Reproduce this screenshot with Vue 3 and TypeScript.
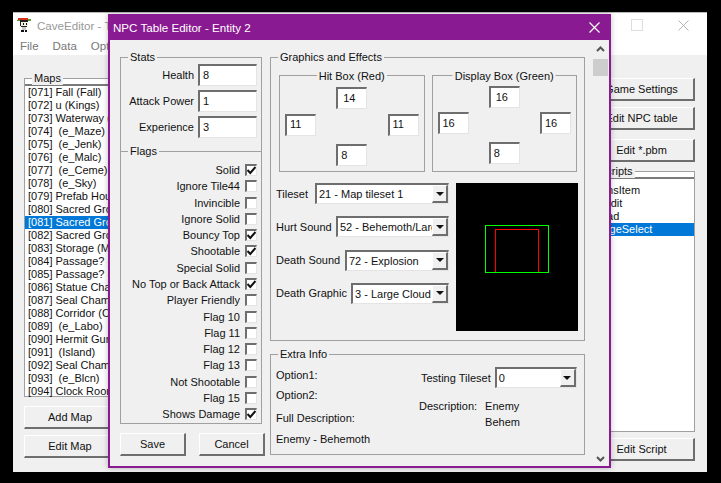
<template>
  <div class="desktop">
    <div class="main-window">
      <div class="main-title">
        <svg class="app-icon" width="16" height="16" viewBox="0 0 16 16" shape-rendering="crispEdges">
          <rect x="1" y="1" width="10" height="2" fill="#d8301c" />
          <rect x="11" y="2" width="3" height="2" fill="#5a9c32" />
          <rect x="0" y="3" width="3" height="1" fill="#5a9c32" />
          <rect x="3" y="3" width="8" height="2" fill="#222" />
          <rect x="3" y="5" width="8" height="4" fill="#f4f0e8" />
          <rect x="3" y="5" width="1" height="4" fill="#222" />
          <rect x="6" y="6" width="1" height="2" fill="#111" />
          <rect x="9" y="6" width="1" height="2" fill="#111" />
          <rect x="4" y="9" width="6" height="1" fill="#222" />
          <rect x="5" y="10" width="4" height="3" fill="#c8c8c8" />
          <rect x="4" y="13" width="3" height="2" fill="#111" />
          <rect x="8" y="13" width="2" height="2" fill="#111" />
        </svg>
        <span class="main-title-text">CaveEditor - The Cave Story Editor</span>
        <span class="win-max"></span>
        <svg class="win-close" width="11" height="11" viewBox="0 0 11 11">
          <path d="M.5.5l10 10M10.500.5l-10 10" stroke="#b4b4b4" fill="none" />
        </svg>
      </div>
      <div class="menu-bar">
        <span>File</span>
        <span>Data</span>
        <span>Options</span>
      </div>
      <div class="main-body">
        <div class="maps-col">
          <div class="group maps-group">
            <span class="legend">Maps</span>
            <div class="list-head"></div>
            <div class="list">
              <div
                v-for="m in maps"
                :key="m"
                class="list-row"
                :class="{ selected: m === selectedMap }"
              >{{ m }}</div>
            </div>
          </div>
          <button class="btn map-btn add">Add Map</button>
          <button class="btn map-btn">Edit Map</button>
        </div>
        <div class="side-col">
          <button class="btn side-btn">Game Settings</button>
          <button class="btn side-btn">Edit NPC table</button>
          <button class="btn side-btn pbm">Edit *.pbm</button>
          <div class="group scripts-group">
            <span class="legend">Scripts</span>
            <div class="list-head"></div>
            <div class="list">
              <div
                v-for="s in scripts"
                :key="s"
                class="list-row script-row"
                :class="{ selected: s === 'StageSelect' }"
              >{{ s }}</div>
            </div>
          </div>
          <button class="btn side-btn script-btn">Edit Script</button>
        </div>
      </div>
    </div>

    <div class="dialog">
      <div class="dialog-title">
        <span>NPC Table Editor - Entity 2</span>
        <svg width="11" height="11" viewBox="0 0 11 11">
          <path d="M.5.5l10 10M10.500.5l-10 10" stroke="#fff" stroke-width="1.2" fill="none" />
        </svg>
      </div>
      <div class="dialog-body">
        <div class="dialog-content">
          <div class="left-col">
            <div class="group stats-group">
              <span class="legend">Stats</span>
              <template v-for="s in stats" :key="s.label">
                <label class="stat-label">{{ s.label }}</label>
                <input class="field" :value="s.value" readonly />
              </template>
            </div>
            <div class="group flags-group">
              <span class="legend">Flags</span>
              <div v-for="f in flags" :key="f.label" class="flag-row">
                <span>{{ f.label }}</span>
                <span class="check">
                  <svg v-if="f.on" width="9" height="9" viewBox="0 0 9 9">
                    <path d="M.5 4l2.800 3L8.500 1" fill="none" stroke="#111" stroke-width="2" />
                  </svg>
                </span>
              </div>
            </div>
            <div class="dialog-actions">
              <button class="btn action-btn">Save</button>
              <button class="btn action-btn">Cancel</button>
            </div>
          </div>

          <div class="right-col">
            <div class="group gfx-group">
              <span class="legend">Graphics and Effects</span>
              <div class="box-row">
                <div v-for="b in boxes" :key="b.title" class="group box-group" :class="b.cls">
                  <span class="legend box-legend">{{ b.title }}</span>
                  <input class="field small top" :value="b.top" readonly />
                  <input class="field small left" :value="b.left" readonly />
                  <input class="field small right" :value="b.right" readonly />
                  <input class="field small bottom" :value="b.bottom" readonly />
                </div>
              </div>
              <div class="gfx-lower">
                <div class="select-col">
                  <div v-for="r in selects" :key="r.label" class="select-row">
                    <span class="select-label">{{ r.label }}</span>
                    <div class="combo" :style="{ width: `${r.width}px` }">
                      <span class="combo-text">{{ r.value }}</span>
                      <span class="combo-btn"><i></i></span>
                    </div>
                  </div>
                </div>
                <div class="preview">
                  <span class="box-green"></span>
                  <span class="box-red"></span>
                </div>
              </div>
            </div>

            <div class="group extra-group">
              <span class="legend">Extra Info</span>
              <div class="extra-left">
                <span class="opt1">Option1:</span>
                <span class="opt2">Option2:</span>
                <span class="full">Full Description:</span>
                <span class="enemy">Enemy - Behemoth</span>
              </div>
              <div class="extra-right">
                <div class="testing">
                  <span>Testing Tileset</span>
                  <div class="combo testing-combo">
                    <span class="combo-text">0</span>
                    <span class="combo-btn"><i></i></span>
                  </div>
                </div>
                <div class="desc">
                  <span>Description:</span>
                  <span class="desc-text">Enemy<br />Behem</span>
                </div>
              </div>
            </div>
          </div>
        </div>

        <div class="scrollbar">
          <svg width="9" height="6" viewBox="0 0 9 6">
            <path d="M1 5l3.500-3.500L8 5" fill="none" stroke="#555" stroke-width="2" />
          </svg>
          <div class="thumb"></div>
          <svg class="arrow-down" width="9" height="6" viewBox="0 0 9 6">
            <path d="M1 1l3.500 3.500L8 1" fill="none" stroke="#555" stroke-width="2" />
          </svg>
        </div>
      </div>
    </div>
  </div>
</template>

<script setup lang="ts">
const maps = [
  '[071] Fall (Fall)',
  '[072] u (Kings)',
  '[073] Waterway (Cabin)',
  '[074]  (e_Maze)',
  '[075]  (e_Jenk)',
  '[076]  (e_Malc)',
  '[077]  (e_Ceme)',
  '[078]  (e_Sky)',
  '[079] Prefab House',
  '[080] Sacred Grounds',
  '[081] Sacred Grounds',
  '[082] Sacred Grounds',
  '[083] Storage (MiBox)',
  '[084] Passage? (Pass1)',
  '[085] Passage? (Pass3)',
  '[086] Statue Chamber',
  '[087] Seal Chamber',
  '[088] Corridor (Ostep)',
  '[089]  (e_Labo)',
  '[090] Hermit Gunsmith',
  '[091]  (Island)',
  '[092] Seal Chamber',
  '[093]  (e_Blcn)',
  '[094] Clock Room',
]
const selectedMap = '[081] Sacred Grounds'

const scripts = ['ArmsItem', 'Credit', 'Head', 'StageSelect']

const stats = [
  { label: 'Health', value: '8' },
  { label: 'Attack Power', value: '1' },
  { label: 'Experience', value: '3' },
]

const flags = [
  { label: 'Solid', on: true },
  { label: 'Ignore Tile44', on: false },
  { label: 'Invincible', on: false },
  { label: 'Ignore Solid', on: false },
  { label: 'Bouncy Top', on: true },
  { label: 'Shootable', on: true },
  { label: 'Special Solid', on: false },
  { label: 'No Top or Back Attack', on: true },
  { label: 'Player Friendly', on: false },
  { label: 'Flag 10', on: false },
  { label: 'Flag 11', on: false },
  { label: 'Flag 12', on: false },
  { label: 'Flag 13', on: false },
  { label: 'Not Shootable', on: false },
  { label: 'Flag 15', on: false },
  { label: 'Shows Damage', on: true },
]

const boxes = [
  { title: 'Hit Box (Red)', cls: 'hit', top: '14', left: '11', right: '11', bottom: '8' },
  { title: 'Display Box (Green)', cls: 'display', top: '16', left: '16', right: '16', bottom: '8' },
]

const selects = [
  { label: 'Tileset', value: '21 - Map tileset 1', width: 134 },
  { label: 'Hurt Sound', value: '52 - Behemoth/Large', width: 113 },
  { label: 'Death Sound', value: '72 - Explosion', width: 104 },
  { label: 'Death Graphic', value: '3 - Large Cloud', width: 98 },
]
</script>

<style>
html,
body {
  background: #000;
}
</style>

<style scoped>
.desktop {
  position: relative;
  width: 721px;
  height: 483px;
  overflow: hidden;
  background: #000;
  font-family: 'Liberation Sans', Arial, sans-serif;
  font-size: 11px;
  color: #111;
}

.main-window {
  position: absolute;
  left: 13px;
  top: 12px;
  width: 694px;
  height: 459px;
  display: flex;
  flex-direction: column;
  background: #f0f0f0;
  border-top: 1px solid #bbb;
}

.main-title {
  height: 24px;
  display: flex;
  align-items: center;
  padding-left: 4px;
  background: #fff;
  color: #999;
  font-size: 11.600px;
}

.app-icon {
  margin-right: 4px;
  flex: none;
}

.main-title-text {
  flex: 1;
  white-space: nowrap;
}

.win-max {
  width: 10px;
  height: 10px;
  border: 1px solid #ddd;
  margin-right: 35px;
}

.win-close {
  margin-right: 18px;
}

.menu-bar {
  height: 18px;
  display: flex;
  gap: 14px;
  padding-left: 7px;
  align-items: center;
  background: #fff;
  color: #777;
  font-size: 11.500px;
}

.main-body {
  flex: 1;
  display: flex;
  justify-content: space-between;
  padding: 23px 12px 0 11px;
}

.maps-col {
  width: 150px;
  display: flex;
  flex-direction: column;
}

.group {
  position: relative;
  border: 1px solid #a0a0a0;
}

.legend {
  position: absolute;
  left: 7px;
  top: -8px;
  padding: 0 2px;
  background: #f0f0f0;
  line-height: 14px;
  white-space: nowrap;
}

.maps-group {
  height: 317px;
  background: #fff;
}

.list-head {
  height: 2px;
  margin-top: 5px;
  background: #7a7a7a;
}

.list {
  overflow: hidden;
}

.list-row {
  height: 13px;
  line-height: 13px;
  padding-left: 3px;
  white-space: pre;
}

.list-row.selected {
  background: #0078d7;
  color: #fff;
}

.btn {
  padding: 0;
  background: #f0f0f0;
  border-style: solid;
  border-width: 1px 2px 2px 1px;
  border-color: #fff #6e6e6e #6e6e6e #fff;
  font: inherit;
  color: #111;
}

.map-btn {
  width: 93px;
  height: 23px;
  flex: none;
  margin-top: 6px;
}

.map-btn.add {
  margin-top: 9px;
}

.side-col {
  width: 106px;
  display: flex;
  flex-direction: column;
}

.side-btn {
  height: 23px;
  flex: none;
  margin-bottom: 6px;
}

.side-btn.pbm {
  margin-top: 3px;
  margin-bottom: 9px;
}

.scripts-group {
  height: 259px;
  background: #fff;
}

.script-row:first-child {
  margin-top: 5px;
}

.script-btn {
  margin-top: 6px;
}

.dialog {
  position: absolute;
  left: 108px;
  top: 14px;
  width: 503px;
  height: 454px;
  box-sizing: border-box;
  display: flex;
  flex-direction: column;
  border: 2px solid #8a1a91;
  border-top: none;
  background: #f0f0f0;
  box-shadow: 0 0 6px rgba(0, 0, 0, 0.25);
}

.dialog-title {
  height: 26px;
  flex: none;
  display: flex;
  align-items: center;
  justify-content: space-between;
  padding: 0 9px 0 3px;
  background: #8a1a91;
  color: #fff;
  font-size: 11.600px;
}

.dialog-body {
  flex: 1;
  display: flex;
  min-height: 0;
}

.dialog-content {
  flex: 1;
  display: flex;
  padding: 17px 0 0 10px;
}

.left-col {
  width: 142px;
  display: flex;
  flex-direction: column;
}

.stats-group {
  height: 94px;
  box-sizing: border-box;
  display: grid;
  grid-template-columns: 1fr 59px;
  grid-auto-rows: 22px;
  gap: 4px;
  align-items: center;
  padding: 6px 4px 0 0;
  border-bottom: none;
}

.stat-label {
  text-align: right;
}

.field {
  box-sizing: border-box;
  width: 100%;
  height: 22px;
  padding: 0 0 2px 3px;
  border-style: solid;
  border-width: 2px 1px 1px 2px;
  border-color: #6e6e6e #e4e4e4 #e4e4e4 #6e6e6e;
  background: #fff;
  font: inherit;
  color: #111;
  outline: none;
}

.flags-group {
  height: 273px;
  box-sizing: border-box;
  display: flex;
  flex-direction: column;
  padding: 10px 4px 0 0;
}

.flag-row {
  height: 16.270px;
  flex: none;
  display: flex;
  align-items: center;
  justify-content: flex-end;
  gap: 5px;
  white-space: nowrap;
}

.check {
  box-sizing: border-box;
  width: 12px;
  height: 12px;
  display: flex;
  align-items: center;
  justify-content: center;
  border-style: solid;
  border-width: 2px 1px 1px 2px;
  border-color: #6e6e6e #e4e4e4 #e4e4e4 #6e6e6e;
  background: #fff;
}

.dialog-actions {
  display: flex;
  gap: 13px;
  margin-top: 9px;
  width: 145px;
}

.action-btn {
  width: 66px;
  height: 23px;
}

.right-col {
  width: 315px;
  margin-left: 8px;
  display: flex;
  flex-direction: column;
}

.gfx-group {
  height: 284px;
  box-sizing: border-box;
  padding: 17px 7px 0 8px;
}

.box-row {
  display: flex;
  gap: 7px;
}

.box-group {
  width: 146px;
  height: 97px;
  box-sizing: border-box;
  display: grid;
  grid-template-columns: repeat(3, 1fr);
  grid-template-rows: repeat(3, 22px);
  align-content: space-between;
}

.hit {
  padding: 11px 5px 5px;
}

.display {
  padding: 10px 5px 7px;
}

.box-legend {
  left: 50%;
  transform: translateX(-50%);
  top: -7px;
}

.field.small {
  width: 31px;
}

.field.small.top {
  grid-area: 1 / 2;
  justify-self: center;
  padding-left: 5px;
}

.field.small.left {
  grid-area: 2 / 1;
}

.field.small.right {
  grid-area: 2 / 3;
  justify-self: end;
}

.hit .field.small.left,
.hit .field.small.right {
  margin-top: -2px;
}

.display .field.small.left,
.display .field.small.right {
  margin-top: -2px;
}

.field.small.bottom {
  grid-area: 3 / 2;
  justify-self: center;
}

.gfx-lower {
  display: flex;
  margin-top: 11px;
  margin-left: -3px;
  gap: 7px;
}

.select-col {
  width: 173px;
  flex: none;
  display: flex;
  flex-direction: column;
  gap: 12.300px;
}

.select-row {
  height: 21px;
  display: flex;
  align-items: center;
  justify-content: space-between;
  white-space: nowrap;
}

.combo {
  box-sizing: border-box;
  height: 21px;
  flex: none;
  display: flex;
  align-items: center;
  justify-content: space-between;
  border-style: solid;
  border-width: 2px 1px 1px 2px;
  border-color: #6e6e6e #e4e4e4 #e4e4e4 #6e6e6e;
  background: #fff;
  overflow: hidden;
}

.combo-text {
  flex: 1;
  overflow: hidden;
  padding-left: 2px;
}

.combo-btn {
  box-sizing: border-box;
  width: 16px;
  height: 18px;
  flex: none;
  display: flex;
  align-items: center;
  justify-content: center;
  background: #f0f0f0;
  border-style: solid;
  border-width: 1px 2px 2px 1px;
  border-color: #fff #6e6e6e #6e6e6e #fff;
}

.combo-btn i {
  width: 0;
  height: 0;
  border-style: solid;
  border-width: 4px 4px 0 4px;
  border-color: #111 transparent transparent transparent;
}

.preview {
  position: relative;
  width: 122px;
  height: 148px;
  flex: none;
  background: #000;
}

.box-green {
  position: absolute;
  left: 29px;
  top: 42px;
  width: 62px;
  height: 46px;
  border: 1px solid #00ff00;
}

.box-red {
  position: absolute;
  left: 39px;
  top: 46px;
  width: 42px;
  height: 42px;
  border: 1px solid #ff0000;
  border-bottom: none;
}

.extra-group {
  height: 101px;
  box-sizing: border-box;
  margin-top: 13px;
  display: flex;
}

.extra-left {
  width: 148px;
  box-sizing: border-box;
  display: flex;
  flex-direction: column;
  padding: 13px 0 0 5px;
}

.extra-left span {
  line-height: 14px;
}

.opt2 {
  margin-top: 6px;
}

.full {
  margin-top: 9px;
}

.enemy {
  margin-top: 7px;
}

.extra-right {
  flex: 1;
  display: flex;
  flex-direction: column;
}

.testing {
  display: flex;
  align-items: center;
  margin-top: 12px;
  padding-left: 2px;
  white-space: nowrap;
}

.testing-combo {
  width: 82px;
  margin-left: 4px;
}

.desc {
  display: flex;
  margin-top: 10px;
  line-height: 16px;
}

.desc-text {
  margin-left: 8px;
}

.scrollbar {
  width: 17px;
  flex: none;
  margin-left: auto;
  display: flex;
  flex-direction: column;
  align-items: center;
  padding-top: 6px;
}

.thumb {
  width: 15px;
  height: 17px;
  margin-top: 7px;
  background: #cdcdcd;
}

.arrow-down {
  margin-top: auto;
  margin-bottom: 4px;
}
</style>
